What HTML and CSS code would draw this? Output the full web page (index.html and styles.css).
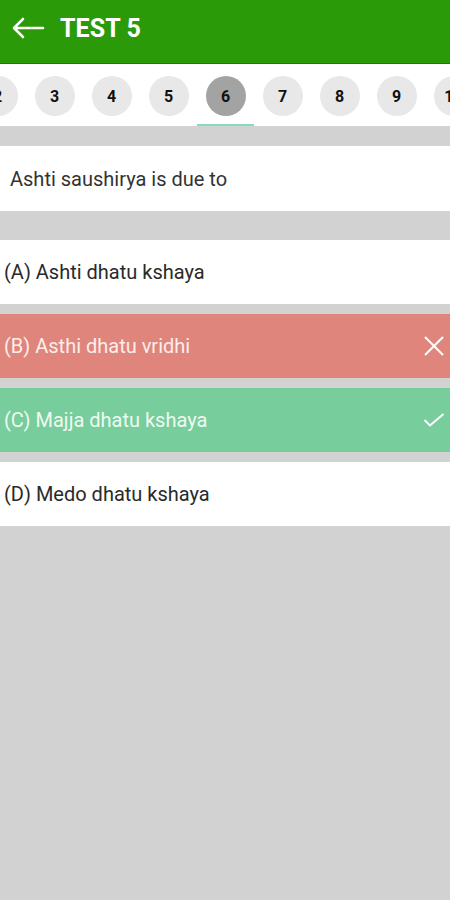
FILE: index.html
```html
<!DOCTYPE html>
<html>
<head>
<meta charset="utf-8">
<link rel="stylesheet" href="styles.css">
</head>
<body>
<div class="app">
  <header class="topbar">
    <svg class="back" width="34" height="22" viewBox="0 0 34 22">
      <path d="M32 11H3M12 2L3 11L12 20" fill="none" stroke="#fff" stroke-width="2.6" stroke-linecap="round" stroke-linejoin="round"/>
    </svg>
    <h1 class="title">TEST 5</h1>
  </header>
  <nav class="tabs">
    <div class="tab"><span class="num">2</span></div>
    <div class="tab"><span class="num">3</span></div>
    <div class="tab"><span class="num">4</span></div>
    <div class="tab"><span class="num">5</span></div>
    <div class="tab active"><span class="num">6</span></div>
    <div class="tab"><span class="num">7</span></div>
    <div class="tab"><span class="num">8</span></div>
    <div class="tab"><span class="num">9</span></div>
    <div class="tab"><span class="num">10</span></div>
  </nav>
  <main class="content">
    <div class="question">Ashti saushirya is due to</div>
    <div class="options">
      <div class="option">(A) Ashti dhatu kshaya</div>
      <div class="option wrong"><span>(B) Asthi dhatu vridhi</span>
        <svg width="22" height="22" viewBox="0 0 22 22"><path d="M2 2L20 20M20 2L2 20" stroke="#fff" stroke-width="2" fill="none"/></svg>
      </div>
      <div class="option right"><span>(C) Majja dhatu kshaya</span>
        <svg width="22" height="14" viewBox="0 0 22 14"><path d="M1.5 7L7 12.5L20.5 1" stroke="#fff" stroke-width="2" fill="none"/></svg>
      </div>
      <div class="option">(D) Medo dhatu kshaya</div>
    </div>
  </main>
</div>
</body>
</html>
```
FILE: styles.css
```css
* { box-sizing: border-box; }
html, body { margin: 0; padding: 0; }
body {
  width: 450px;
  height: 900px;
  overflow: hidden;
  background: #d3d2d3;
  font-family: Roboto, "Liberation Sans", sans-serif;
}
.app { display: flex; flex-direction: column; }
.topbar {
  height: 64px;
  background: #2a9a08;
  display: flex;
  align-items: center;
  padding-left: 11px;
  padding-bottom: 7px;
  border-bottom: 1px solid #1f7a05;
}
.back { display: block; margin-right: 15px; }
.title {
  margin: 0;
  color: #fff;
  font-size: 25px;
  font-weight: 700;
  letter-spacing: 0.1px;
}
.tabs {
  height: 62px;
  padding-top: 4px;
  background: #fff;
  display: flex;
  overflow: hidden;
  margin-left: -31px;
  width: 520px;
}
.tab {
  flex: 0 0 57px;
  display: flex;
  align-items: center;
  justify-content: center;
  border-bottom: 2px solid transparent;
}
.tab.active { border-bottom-color: #86d9c3; }
.num {
  width: 40px;
  height: 40px;
  border-radius: 50%;
  background: #e8e8e8;
  display: flex;
  align-items: center;
  justify-content: center;
  font-size: 16px;
  font-weight: 700;
  color: #111;
}
.tab.active .num { background: #a3a3a3; }
.content { padding-top: 20px; }
.question {
  height: 65px;
  background: #fff;
  display: flex;
  align-items: center;
  padding-left: 10px;
  font-size: 20px;
  color: #333;
}
.options {
  margin-top: 29px;
  display: flex;
  flex-direction: column;
  gap: 10px;
}
.option {
  height: 64px;
  background: #fff;
  display: flex;
  align-items: center;
  justify-content: space-between;
  padding: 0 4px 0 4px;
  font-size: 20px;
  color: #2a2a2a;
}
.option svg { display: block; margin-right: 1px; }
.option.wrong { background: #e0857b; color: #fbeeec; }
.option.right { background: #77cd9b; color: #eefaf2; }
```
